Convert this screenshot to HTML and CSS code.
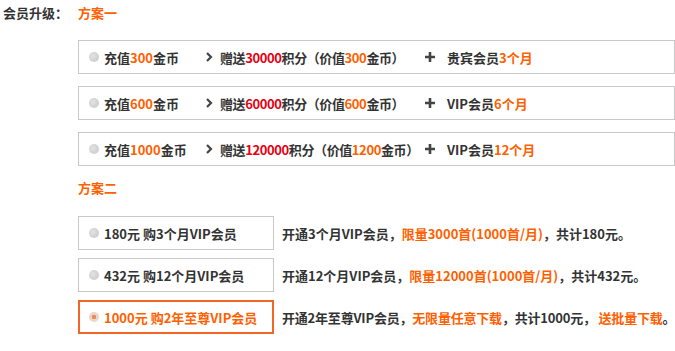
FILE: index.html
```html
<!DOCTYPE html>
<html lang="zh-CN">
<head>
    <meta charset="UTF-8">
    <title>会员升级</title>
    <link rel="stylesheet" href="styles.css">
</head>
<body>
    <div class="upgrade">
        <div class="head">
            <span class="label">会员升级：</span>
            <span class="plan-title">方案一</span>
        </div>

        <div class="plan-list">
            <div class="plan">
                <i class="radio"></i>
                <span class="col1">充值<em>300</em>金币</span>
                <svg class="arrow" viewBox="0 0 7 10"><path d="M1 1 L5 5 L1 9" /></svg>
                <span class="col2">赠送<b>30000</b>积分（价值<em>300</em>金币）</span>
                <svg class="plus" viewBox="0 0 10 10"><path d="M5 0 V10 M0 5 H10" /></svg>
                <span class="col3">贵宾会员<em>3个月</em></span>
            </div>
            <div class="plan">
                <i class="radio"></i>
                <span class="col1">充值<em>600</em>金币</span>
                <svg class="arrow" viewBox="0 0 7 10"><path d="M1 1 L5 5 L1 9" /></svg>
                <span class="col2">赠送<b>60000</b>积分（价值<em>600</em>金币）</span>
                <svg class="plus" viewBox="0 0 10 10"><path d="M5 0 V10 M0 5 H10" /></svg>
                <span class="col3">VIP会员<em>6个月</em></span>
            </div>
            <div class="plan">
                <i class="radio"></i>
                <span class="col1">充值<em>1000</em>金币</span>
                <svg class="arrow" viewBox="0 0 7 10"><path d="M1 1 L5 5 L1 9" /></svg>
                <span class="col2">赠送<b>120000</b>积分（价值<em>1200</em>金币）</span>
                <svg class="plus" viewBox="0 0 10 10"><path d="M5 0 V10 M0 5 H10" /></svg>
                <span class="col3">VIP会员<em>12个月</em></span>
            </div>
        </div>

        <div class="plan-title second">方案二</div>

        <div class="vip-list">
            <div class="vip-row">
                <div class="vip-box"><i class="radio"></i>180元 购3个月VIP会员</div>
                <div class="vip-desc">开通3个月VIP会员，<em>限量3000首(1000首/月)</em>，共计180元。</div>
            </div>
            <div class="vip-row">
                <div class="vip-box"><i class="radio"></i>432元 购12个月VIP会员</div>
                <div class="vip-desc">开通12个月VIP会员，<em>限量12000首(1000首/月)</em>，共计432元。</div>
            </div>
            <div class="vip-row">
                <div class="vip-box active"><i class="radio"></i>1000元 购2年至尊VIP会员</div>
                <div class="vip-desc tight">开通2年至尊VIP会员，<em>无限量任意下载</em>，共计1000元， <em>送批量下载</em>。</div>
            </div>
        </div>
    </div>
</body>
</html>
```

FILE: styles.css
```css
body {
    margin: 0;
    background: #fff;
    font-family: "Noto Sans CJK SC", "Liberation Sans", sans-serif;
    font-size: 13px;
    font-weight: bold;
    color: #333;
}
em, b {
    font-style: normal;
    font-weight: inherit;
}
em {
    color: #ff6000;
}
b {
    color: #e60012;
}
.upgrade {
    padding-left: 3px;
}
.head {
    display: flex;
    align-items: center;
    height: 24px;
}
.label {
    width: 75px;
}
.plan-title {
    color: #ff6000;
}
.plan-list {
    margin: 16px 0 0 75px;
}
.plan {
    display: flex;
    align-items: center;
    box-sizing: border-box;
    width: 597px;
    height: 34px;
    margin-bottom: 12px;
    padding-left: 10px;
    border: 1px solid #c8c8c8;
    white-space: nowrap;
}
.radio {
    display: inline-block;
    width: 10px;
    height: 10px;
    margin-right: 5px;
    border-radius: 50%;
    background: radial-gradient(circle at 40% 40%, #e2e2e2, #c6c6c6);
    flex-shrink: 0;
}
.col1 {
    width: 102px;
    flex-shrink: 0;
}
.arrow {
    width: 7px;
    height: 10px;
    margin-right: 7px;
    flex-shrink: 0;
}
.arrow path {
    fill: none;
    stroke: #444;
    stroke-width: 2.2;
}
.col2 {
    width: 205px;
    flex-shrink: 0;
    letter-spacing: -0.4px;
}
.plus {
    width: 10px;
    height: 10px;
    margin-right: 12px;
    flex-shrink: 0;
}
.plus path {
    stroke: #444;
    stroke-width: 2.6;
}
.second {
    margin: 4px 0 0 75px;
    height: 20px;
    line-height: 20px;
}
.vip-list {
    margin: 18px 0 0 75px;
}
.vip-row {
    display: flex;
    align-items: center;
    margin-bottom: 8px;
}
.vip-box {
    display: flex;
    align-items: center;
    box-sizing: border-box;
    flex-shrink: 0;
    width: 196px;
    height: 34px;
    padding-left: 10px;
    border: 1px solid #c8c8c8;
    white-space: nowrap;
}
.vip-box.active {
    border: 2px solid #f26522;
    padding-left: 9px;
    color: #ff6000;
}
.vip-box.active .radio {
    background: radial-gradient(circle, #f5884a 0 2px, #e6d6cc 2.5px);
}
.vip-desc {
    margin-left: 8px;
    white-space: nowrap;
}
.vip-desc.tight {
    letter-spacing: -0.2px;
}
```
